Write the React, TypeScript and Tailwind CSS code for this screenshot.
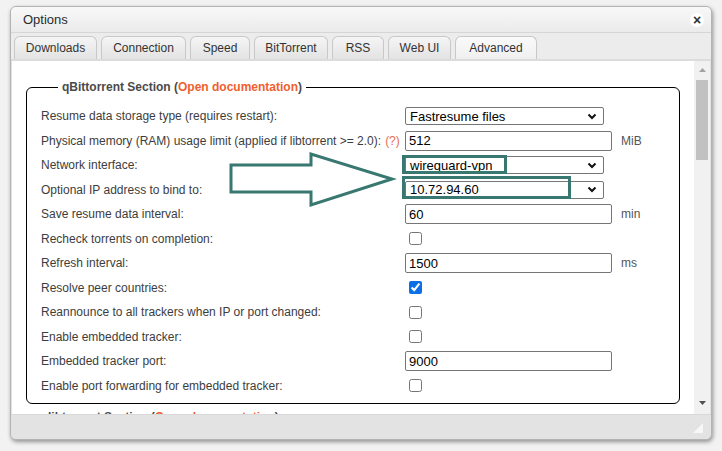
import React from 'react';

type Row = {
  label: string;
  kind: 'select' | 'input' | 'check';
  value?: string;
  unit?: string;
  checked?: boolean;
  help?: boolean;
};

const rows: Row[] = [
  { label: 'Resume data storage type (requires restart):', kind: 'select', value: 'Fastresume files' },
  { label: 'Physical memory (RAM) usage limit (applied if libtorrent >= 2.0):', kind: 'input', value: '512', unit: 'MiB', help: true },
  { label: 'Network interface:', kind: 'select', value: 'wireguard-vpn' },
  { label: 'Optional IP address to bind to:', kind: 'select', value: '10.72.94.60' },
  { label: 'Save resume data interval:', kind: 'input', value: '60', unit: 'min' },
  { label: 'Recheck torrents on completion:', kind: 'check' },
  { label: 'Refresh interval:', kind: 'input', value: '1500', unit: 'ms' },
  { label: 'Resolve peer countries:', kind: 'check', checked: true },
  { label: 'Reannounce to all trackers when IP or port changed:', kind: 'check' },
  { label: 'Enable embedded tracker:', kind: 'check' },
  { label: 'Embedded tracker port:', kind: 'input', value: '9000' },
  { label: 'Enable port forwarding for embedded tracker:', kind: 'check' },
];

const tabs = [
  { name: 'Downloads', w: 'w-[83px]' },
  { name: 'Connection', w: 'w-[85px]' },
  { name: 'Speed', w: 'w-[60px]' },
  { name: 'BitTorrent', w: 'w-[74px]' },
  { name: 'RSS', w: 'w-[52px]' },
  { name: 'Web UI', w: 'w-[63px]' },
  { name: 'Advanced', w: 'w-[82px]' },
];

// Chrome-style select chevron
function Chevron() {
  return (
    <svg width="10" height="7" viewBox="0 0 10 7">
      <path d="M1.5 1.5 L5 5 L8.5 1.5" fill="none" stroke="#111" strokeWidth="2" />
    </svg>
  );
}

function Control({ row }: { row: Row }) {
  if (row.kind === 'select') {
    return (
      <div className="flex h-[18px] w-[199px] items-center justify-between rounded-[2px] border border-[#767676] bg-white pl-[4px] pr-[6px] text-[13px] leading-none text-black">
        <span>{row.value}</span>
        <Chevron />
      </div>
    );
  }
  if (row.kind === 'input') {
    return (
      <div className="flex items-center">
        <div className="flex h-[20px] w-[207px] items-center rounded-[2px] border border-[#767676] bg-white pl-[3px] text-[13px] leading-none text-black">
          {row.value}
        </div>
        {row.unit && <span className="ml-[9px] text-[12px] text-[#555]">{row.unit}</span>}
      </div>
    );
  }
  return (
    <input
      type="checkbox"
      readOnly
      checked={!!row.checked}
      className="ml-[4px] h-[13px] w-[13px] accent-[#0b6fe8]"
    />
  );
}

export default function App() {
  return (
    <div className="relative h-[451px] w-[722px] overflow-hidden bg-[#f2f2f2] pl-[10px] pt-[6px] font-['Liberation_Sans',Arial,sans-serif]">
      <div className="flex h-[434px] w-[702px] flex-col overflow-hidden rounded-[6px] border border-[#b3b3b3] bg-[#e3e3e3] shadow-[1px_2px_4px_rgba(0,0,0,0.4)]">
        {/* Title bar */}
        <div className="flex h-[26px] items-center justify-between border-b border-[#d6d6d6] bg-gradient-to-b from-[#f8f8f8] to-[#ebebeb] pl-[12px] pr-[7px]">
          <span className="text-[13px] text-[#2b2b2b]">Options</span>
          <div className="flex h-[14px] w-[14px] items-center justify-center rounded-full bg-white text-[14px] font-bold leading-none text-[#333]">
            ×
          </div>
        </div>

        {/* Tabs */}
        <div className="flex h-[28px] items-end gap-[4px] border-b-2 border-[#dcdcdc] bg-[#ececec] pl-[3px]">
          {tabs.map(t => (
            <div
              key={t.name}
              className={`flex h-[23px] ${t.w} items-center justify-center rounded-t-[6px] border border-b-0 border-[#c8c8c8] text-[12px] text-[#333] ${
                t.name === 'Advanced'
                  ? 'bg-gradient-to-b from-[#fafafa] to-[#efefef]'
                  : 'bg-gradient-to-b from-[#f5f5f5] to-[#e3e3e3]'
              }`}
            >
              {t.name}
            </div>
          ))}
        </div>

        {/* Body */}
        <div className="flex h-[353px] pl-[1px] pr-[1px]">
          <div className="flex-1 overflow-hidden bg-white">
            <fieldset className="mx-[14px] mt-[19px] rounded-[6px] border border-black pb-[5px] pl-[14px] pr-[10px] pt-[9px]">
              <legend className="ml-[17px] px-[4px] text-[12px] font-bold leading-[15px] text-[#4a4a4a]">
                qBittorrent Section (<span className="text-[#f0602e]">Open documentation</span>)
              </legend>
              <div className="grid grid-cols-[364px_1fr]">
                {rows.map(r => (
                  <React.Fragment key={r.label}>
                    <div className="flex h-[24.5px] items-center whitespace-nowrap text-[12px] text-[#3d3d3d]">
                      {r.label}
                      {r.help && <span className="ml-[4px] text-[#e2704f]">(?)</span>}
                    </div>
                    <div className="flex h-[24.5px] items-center">
                      <Control row={r} />
                    </div>
                  </React.Fragment>
                ))}
              </div>
            </fieldset>
            <fieldset className="mx-[14px] mt-[6px] h-[60px] rounded-[6px] border border-black">
              <legend className="ml-[17px] px-[4px] text-[12px] font-bold leading-[15px] text-[#4a4a4a]">
                libtorrent Section (<span className="text-[#f0602e]">Open documentation</span>)
              </legend>
            </fieldset>
          </div>

          {/* Scrollbar */}
          <div className="flex w-[16px] flex-col items-center bg-[#f1f1f1]">
            <div className="flex h-[19px] w-full items-center justify-center pb-[2px]">
              <svg width="7" height="4" viewBox="0 0 7 4">
                <path d="M0 4 L3.5 0 L7 4 Z" fill="#a3a3a3" />
              </svg>
            </div>
            <div className="h-[80px] w-[12px] bg-[#c1c1c1]" />
            <div className="flex-1" />
            <div className="flex h-[19px] w-full items-center justify-center pb-[4px]">
              <svg width="7" height="4" viewBox="0 0 7 4">
                <path d="M0 0 L3.5 4 L7 0 Z" fill="#505050" />
              </svg>
            </div>
          </div>
        </div>

        {/* Footer */}
        <div className="flex flex-1 items-end justify-end border-t border-[#d8d8d8] bg-[#e3e3e3] pb-[6px] pr-[8px]">
          <svg width="10" height="10" viewBox="0 0 10 10">
            <path d="M10 0 L10 10 L0 10 Z" fill="#f7f7f7" />
          </svg>
        </div>
      </div>

      {/* Annotation overlay */}
      <svg className="pointer-events-none absolute left-0 top-0" width="722" height="451" viewBox="0 0 722 451">
        <g fill="none" stroke="#387871" strokeWidth="3">
          <rect x="403.5" y="156.5" width="102" height="16" />
          <rect x="403.5" y="177.5" width="166" height="20" />
          <polygon points="231,165 311,165 311,154 392,179 311,205 311,192 231,192" strokeLinejoin="miter" />
        </g>
      </svg>
    </div>
  );
}
